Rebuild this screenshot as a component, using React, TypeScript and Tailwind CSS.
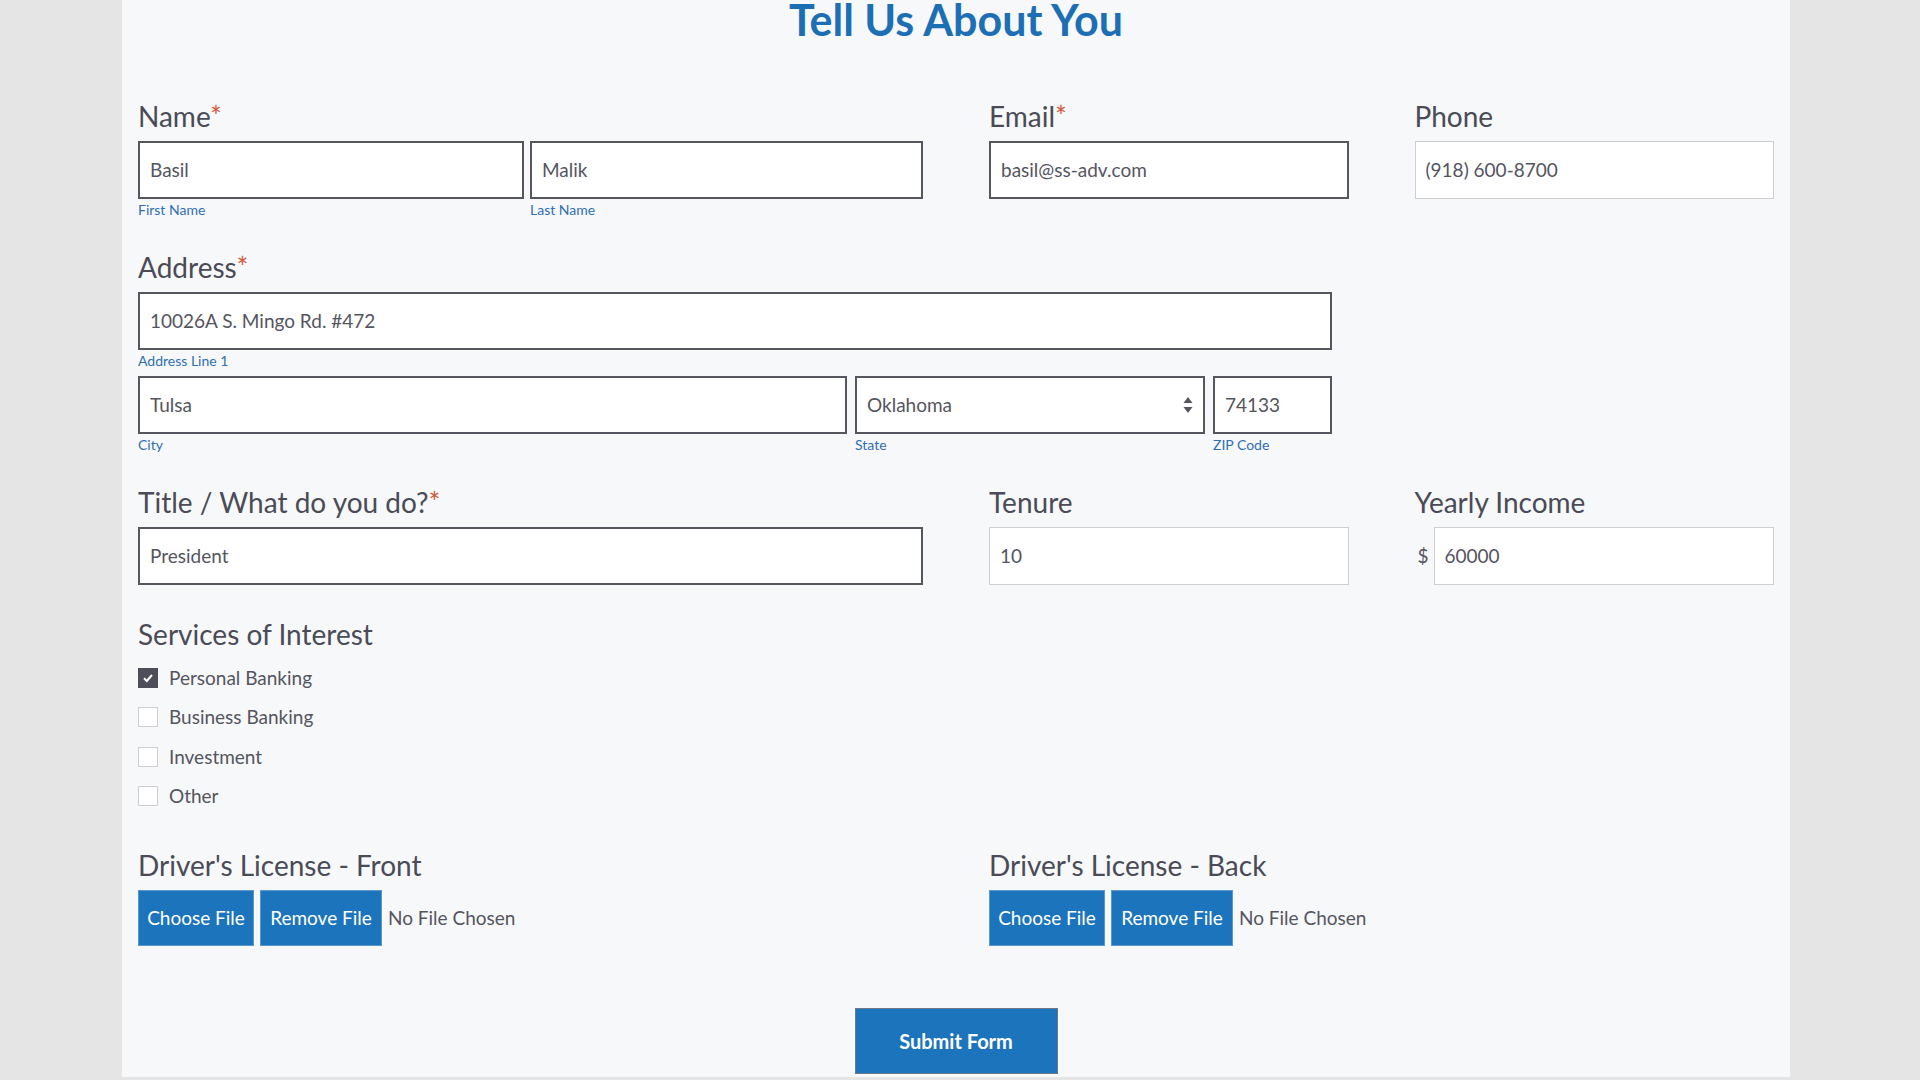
import React from "react";

const font = { fontFamily: "Lato, 'Open Sans', sans-serif" };

const Label = ({ text, required }: { text: string; required?: boolean }) => (
  <div className="text-[28px] leading-[34px] text-[#4a4b57] mb-2 whitespace-nowrap">
    {text}
    {required && <span className="text-[#d25b3c]">*</span>}
  </div>
);

const Sub = ({ text }: { text: string }) => (
  <div className="text-[14px] leading-[16px] mt-[3px] text-[#2f6fb3]">{text}</div>
);

const Input = ({ value, light }: { value: string; light?: boolean }) => (
  <div
    className={
      "h-[58px] bg-white flex items-center px-[10px] text-[19px] text-[#555560] " +
      (light ? "border border-[#cfcfd3]" : "border-2 border-[#55565e]")
    }
  >
    {value}
  </div>
);

const Check = ({ label, checked }: { label: string; checked?: boolean }) => (
  <div className="h-[39.5px] flex items-center gap-[11px]">
    {checked ? (
      <div className="w-[20px] h-[20px] bg-[#4d4e5a] flex items-center justify-center">
        <svg width="12" height="12" viewBox="0 0 12 12">
          <path d="M2 6.3 L4.8 9 L10 3" stroke="white" strokeWidth="2" fill="none" />
        </svg>
      </div>
    ) : (
      <div className="w-[20px] h-[20px] bg-white border border-[#cfcfd3]" />
    )}
    <span className="text-[19px] text-[#555560]">{label}</span>
  </div>
);

const FileRow = () => (
  <div className="flex items-center">
    <button className="h-[56px] w-[116px] bg-[#1c75bc] border border-[#5b98cf] text-white text-[19px]">
      Choose File
    </button>
    <button className="h-[56px] w-[122px] ml-[6px] bg-[#1c75bc] border border-[#5b98cf] text-white text-[19px]">
      Remove File
    </button>
    <span className="ml-[6px] text-[19px] text-[#555560]">No File Chosen</span>
  </div>
);

export default function App() {
  return (
    <div className="min-h-screen bg-[#e5e5e5] overflow-hidden" style={font}>
      <div className="ml-[122px] w-[1668px] h-[1080px] bg-[#f7f8fa] px-4">
        <h1 className="text-center text-[43px] leading-[46px] mt-[-3px] font-bold text-[#1c6fb5]">
          Tell Us About You
        </h1>

        <div className="grid grid-cols-4 gap-x-[66px] mt-[56px]">
          <div className="col-span-2">
            <Label text="Name" required />
            <div className="grid grid-cols-[386px_1fr] gap-[6px]">
              <div>
                <Input value="Basil" />
                <Sub text="First Name" />
              </div>
              <div>
                <Input value="Malik" />
                <Sub text="Last Name" />
              </div>
            </div>
          </div>
          <div>
            <Label text="Email" required />
            <Input value="basil@ss-adv.com" />
          </div>
          <div>
            <Label text="Phone" />
            <Input value="(918) 600-8700" light />
          </div>
        </div>

        <div className="w-[1194px] mt-8">
          <Label text="Address" required />
          <Input value="10026A S. Mingo Rd. #472" />
          <Sub text="Address Line 1" />
          <div className="grid grid-cols-[709px_350px_1fr] gap-2 mt-[7px]">
            <div>
              <Input value="Tulsa" />
              <Sub text="City" />
            </div>
            <div>
              <div className="h-[58px] bg-white border-2 border-[#55565e] flex items-center justify-between px-[10px] text-[19px] text-[#555560]">
                <span>Oklahoma</span>
                <svg width="10" height="18" viewBox="0 0 10 18">
                  <path d="M5 1 L9.5 7 L0.5 7 Z M5 17 L9.5 11 L0.5 11 Z" fill="#55565e" />
                </svg>
              </div>
              <Sub text="State" />
            </div>
            <div>
              <Input value="74133" />
              <Sub text="ZIP Code" />
            </div>
          </div>
        </div>

        <div className="grid grid-cols-4 gap-x-[66px] mt-8">
          <div className="col-span-2">
            <Label text="Title / What do you do?" required />
            <Input value="President" />
          </div>
          <div>
            <Label text="Tenure" />
            <Input value="10" light />
          </div>
          <div>
            <Label text="Yearly Income" />
            <div className="flex items-center gap-[5px]">
              <span className="text-[19px] text-[#555560] pl-[3px]">$</span>
              <div className="flex-1">
                <Input value="60000" light />
              </div>
            </div>
          </div>
        </div>

        <div className="mt-8">
          <div className="text-[28px] leading-[34px] text-[#4a4b57] mb-[7px]">Services of Interest</div>
          <Check label="Personal Banking" checked />
          <Check label="Business Banking" />
          <Check label="Investment" />
          <Check label="Other" />
        </div>

        <div className="grid grid-cols-4 gap-x-[66px] mt-8">
          <div className="col-span-2">
            <Label text="Driver's License - Front" />
            <FileRow />
          </div>
          <div className="col-span-2">
            <Label text="Driver's License - Back" />
            <FileRow />
          </div>
        </div>

        <div className="flex justify-center mt-[62px]">
          <button className="w-[203px] h-[66px] bg-[#1c75bc] border border-[#6f7686] text-white text-[20px] font-bold">
            Submit Form
          </button>
        </div>
      </div>
    </div>
  );
}
